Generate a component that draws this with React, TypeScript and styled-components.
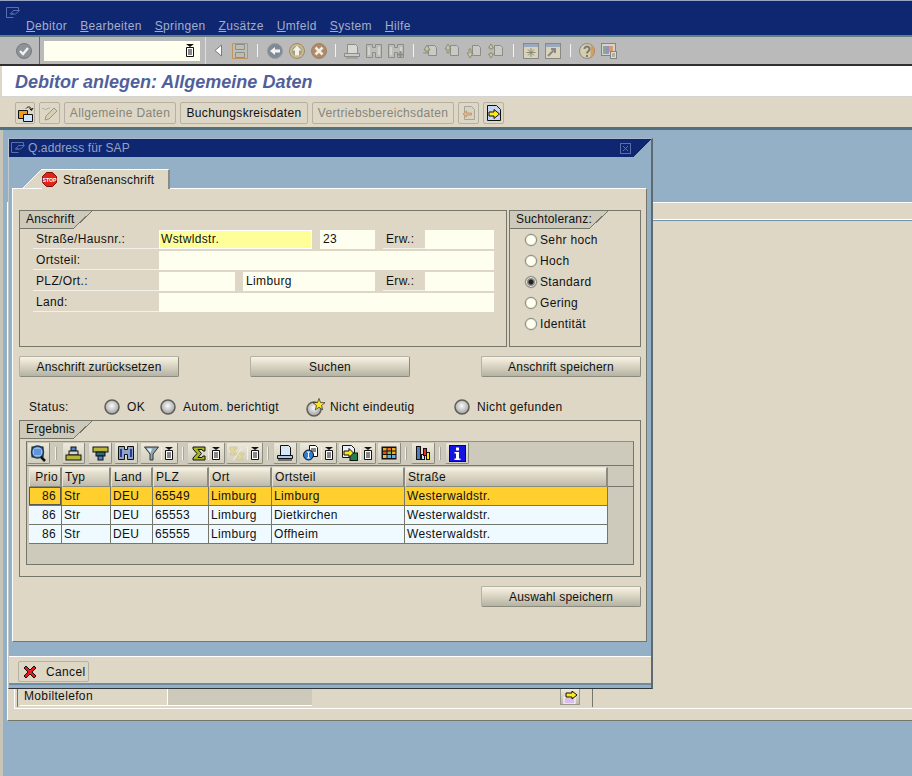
import React from 'react';
import styled, { createGlobalStyle } from 'styled-components';

const GlobalStyle = createGlobalStyle`
  html, body {
    margin: 0;
    padding: 0;
    background: #93b0c6;
  }

  body {
    font-family: "Liberation Sans", Arial, sans-serif;
    font-size: 12px;
    letter-spacing: 0.35px;
    color: #111;
    overflow: hidden;
  }
`;

const beige = '#ded7c6';
const panelGrey = '#cdc9bb';
const blue = '#93b0c6';
const navy = '#0f2770';
const line = '#75766a';

const Screen = styled.div`
  position: relative;
  width: 912px;
  height: 776px;
  overflow: hidden;
  display: flex;
  flex-direction: column;
  background: ${blue};
`;

/* ---------- top of the window ---------- */

const MenuBar = styled.div`
  height: 35px;
  box-sizing: border-box;
  background: ${navy};
  border-top: 1px solid #98a4c4;
  padding: 4px 0 0 5px;
  flex: none;
`;

const MenuRow = styled.nav`
  display: flex;
  gap: 13px;
  margin: -2px 0 0 21px;
  color: #a3aecb;

  u {
    text-decoration-thickness: 1px;
  }
`;

const SysBar = styled.div`
  height: 31px;
  box-sizing: border-box;
  flex: none;
  display: flex;
  align-items: center;
  background: #bababa;
  border-top: 2px solid #5f7f80;
  border-bottom: 2px solid #2f2f2f;
  padding-left: 13px;
`;

const SysCell = styled.div`
  width: 22px;
  height: 22px;
  flex: none;
  display: flex;
  align-items: center;
  justify-content: center;
`;

const SysSep = styled.div<{ $w: number }>`
  width: ${(p) => p.$w}px;
  flex: none;
  display: flex;
  justify-content: center;

  &::before {
    content: '';
    width: 1px;
    height: 13px;
    background: #f2f2f2;
  }
`;

const CommandWrap = styled.div`
  width: 167px;
  height: 27px;
  box-sizing: border-box;
  margin-left: 4px;
  margin-right: 1px;
  padding-left: 4px;
  flex: none;
  display: flex;
  align-items: center;
  border-left: 1px solid #6a6a6a;
  border-right: 1px solid #dcdcdc;
`;

const CommandField = styled.div`
  width: 156px;
  height: 20px;
  box-sizing: border-box;
  background: #fffff0;
  display: flex;
  align-items: center;
  justify-content: flex-end;
  padding-right: 5px;
`;

const TitleBar = styled.h1`
  margin: 0;
  height: 31px;
  box-sizing: border-box;
  flex: none;
  background: #fff;
  border-bottom: 1px solid #d4d4d4;
  border-left: 2px solid ${beige};
  padding: 5px 0 0 13px;
  font-size: 18px;
  line-height: 22px;
  font-weight: bold;
  font-style: italic;
  letter-spacing: 0;
  color: #515f9c;
`;

const AppBar = styled.div`
  height: 33px;
  box-sizing: border-box;
  flex: none;
  display: flex;
  align-items: flex-start;
  gap: 4px;
  padding: 5px 0 0 15px;
  background: ${beige};
  border-bottom: 3px solid #4f7180;
`;

const AppButton = styled.div<{ $w: number; $off?: boolean }>`
  width: ${(p) => p.$w}px;
  height: 22px;
  box-sizing: border-box;
  flex: none;
  display: flex;
  align-items: center;
  justify-content: center;
  border: 1px solid #b4b0a4;
  border-radius: 2px;
  color: ${(p) => (p.$off ? '#85857b' : '#111')};
`;

/* ---------- panel behind the popup ---------- */

const BackArea = styled.div`
  flex: 1;
  display: flex;
  border-left: 3px solid #c8c4b8;
`;

const BackPanel = styled.div`
  width: 100%;
  height: 519px;
  box-sizing: border-box;
  margin: 72px 0 0 4px;
  background: ${beige};
  border-top: 1px solid #fff;
  border-left: 1px solid #fff;
  border-bottom: 1px solid ${line};
  display: flex;
  flex-direction: column;
`;

const BackStrip = styled.div`
  height: 16px;
  flex: none;
  border-bottom: 1px solid #fff;
  box-shadow: 0 1px 0 #6d91ab;
`;

const BackBody = styled.div`
  flex: 1;
`;

const BackFoot = styled.div`
  height: 31px;
  flex: none;
  box-sizing: border-box;
  display: flex;
  margin-left: 3px;
  padding: 0 0 0 3px;
`;

const BackFrame = styled.div`
  height: 20px;
  flex: 1;
  display: flex;
  align-items: flex-start;
  border-left: 1px solid #fff;
  border-bottom: 1px solid #fff;
  box-sizing: border-box;
  padding-left: 2px;
`;

const BackRule = styled.div`
  width: 1px;
  height: 18px;
  background: ${line};
  flex: none;
`;

const BackLabel = styled.div`
  width: 147px;
  height: 17px;
  box-sizing: border-box;
  margin-left: 2px;
  padding: 0 0 0 4px;
  line-height: 14px;
  border-bottom: 1px solid #fff;
  flex: none;
`;

const BackValue = styled.div`
  width: 145px;
  height: 17px;
  box-sizing: border-box;
  flex: none;
  background: ${panelGrey};
  border-left: 1px solid #fff;
  border-bottom: 1px solid #fff;
`;

const BackButton = styled.div`
  width: 20px;
  height: 16px;
  margin-left: 248px;
  flex: none;
  box-sizing: border-box;
  display: flex;
  align-items: flex-end;
  justify-content: center;
  border: 1px solid #9a988c;
  border-top: 0;
  background: linear-gradient(#eeebdd, #bdb9aa);
`;

const BackLine = styled(BackRule)`
  margin-left: 12px;
`;

/* ---------- popup ---------- */

const Popup = styled.section`
  position: absolute;
  left: 8px;
  top: 138px;
  width: 645px;
  height: 551px;
  box-sizing: border-box;
  display: flex;
  flex-direction: column;
  background: ${blue};
  border-top: 1px solid #aab6cc;
  border-right: 2px solid #5d6a70;
  border-bottom: 1px solid #2f3436;
  border-left: 1px solid #c5c8c8;
`;

const PopupTitle = styled.header`
  height: 18px;
  flex: none;
  display: flex;
  align-items: center;
  gap: 2px;
  padding: 0 0 0 1px;
  letter-spacing: 0.1px;
  color: #94a1c6;
  background: linear-gradient(${navy}, ${navy}) no-repeat 0 0 / calc(100% - 17px) 100%,
    linear-gradient(to bottom right, ${navy} 50%, transparent 50%) no-repeat 100% 0 / 17px 100%;
`;

const PopupClose = styled.div`
  margin-left: auto;
  margin-right: 20px;
  display: flex;
`;

const TabStrip = styled.div`
  height: 19px;
  flex: none;
  margin-top: 12px;
  padding-left: 14px;
  display: flex;
`;

const TabSlant = styled.div`
  width: 19px;
  flex: none;
  background: linear-gradient(to top left, ${beige} calc(50% - 0.5px), #fff calc(50% - 0.5px), #fff calc(50% + 0.5px), transparent calc(50% + 0.5px));
`;

/* the tab runs one pixel over the panel's white top edge */
const Tab = styled.div`
  position: relative;
  z-index: 1;
  width: 128px;
  height: 20px;
  box-sizing: border-box;
  flex: none;
  display: flex;
  align-items: center;
  gap: 6px;
  letter-spacing: 0.2px;
  background: ${beige};
  border-top: 1px solid #fff;
  border-right: 2px solid #8b8b80;
`;

const TabPanel = styled.div`
  height: 454px;
  flex: none;
  box-sizing: border-box;
  margin: 0 4px 0 3px;
  padding: 21px 6px 0;
  background: ${beige};
  border-top: 1px solid #fff;
  border-left: 1px solid #fff;
  border-right: 1px solid ${line};
  border-bottom: 1px solid ${line};
`;

const GroupRow = styled.div`
  display: flex;
  gap: 2px;
`;

const Group = styled.fieldset<{ $w: number; $h: number }>`
  margin: 0;
  padding: 0;
  box-sizing: border-box;
  width: ${(p) => p.$w}px;
  height: ${(p) => p.$h}px;
  min-width: 0;
  flex: none;
  border: 1px solid ${line};
`;

const GroupTitle = styled.div<{ $w: number }>`
  position: relative;
  z-index: 0;
  width: ${(p) => p.$w}px;
  height: 18px;
  box-sizing: border-box;
  padding-left: 6px;
  line-height: 17px;
  letter-spacing: 0.2px;
  white-space: nowrap;
  background: ${panelGrey};
  border-bottom: 1px solid ${line};

  &::after {
    content: '';
    position: absolute;
    z-index: -1;
    top: 0;
    left: 100%;
    width: 18px;
    height: 17px;
    background: linear-gradient(to bottom right, ${panelGrey} calc(50% - 0.5px), ${line} calc(50% - 0.5px), ${line} calc(50% + 0.5px), transparent calc(50% + 0.5px));
  }
`;

const Fields = styled.div`
  display: flex;
  flex-direction: column;
  gap: 2px;
  padding: 1px 0 0 13px;
`;

const FieldRow = styled.div`
  display: flex;
  height: 19px;
`;

const FieldLabel = styled.label<{ $w: number; $left?: number }>`
  width: ${(p) => p.$w}px;
  margin-left: ${(p) => p.$left ?? 0}px;
  box-sizing: border-box;
  flex: none;
  padding: 0 0 0 3px;
  line-height: 19px;
  border-bottom: 1px solid #f2f0e8;
`;

const Field = styled.div<{ $w: number; $left?: number; $hot?: boolean }>`
  width: ${(p) => p.$w}px;
  margin-left: ${(p) => p.$left ?? 0}px;
  height: 19px;
  box-sizing: border-box;
  flex: none;
  padding: 0 0 0 ${(p) => (p.$hot ? 1 : 2)}px;
  line-height: 17px;
  background: ${(p) => (p.$hot ? '#ffff99' : '#fffff0')};
  border: 1px solid ${(p) => (p.$hot ? '#fff' : '#fffff0')};
`;

const Radios = styled.div`
  display: flex;
  flex-direction: column;
  padding: 0 0 0 15px;
`;

const RadioRow = styled.div`
  height: 21px;
  display: flex;
  align-items: center;
  gap: 3px;
`;

const RadioDot = styled.span<{ $on?: boolean }>`
  width: 12px;
  height: 12px;
  box-sizing: border-box;
  flex: none;
  border-radius: 50%;
  border: 1px solid #8b8b80;
  box-shadow: inset 0 0 0 1px #f6f4ea, 0 0 0 0.5px #c0bdb0;
  background: ${(p) => (p.$on ? 'radial-gradient(circle, #222 0 2px, #8a8a86 3px)' : '#fffff0')};
`;

const ActionRow = styled.div`
  display: flex;
  justify-content: space-between;
  margin: 9px -1px 0 0;
`;

const ActionEnd = styled(ActionRow)`
  justify-content: flex-end;
`;

const Action = styled.button`
  width: 160px;
  height: 21px;
  box-sizing: border-box;
  padding: 0;
  font: inherit;
  letter-spacing: 0.2px;
  color: #111;
  border: 1px solid #8b8a7e;
  border-top-color: #b4b2a4;
  border-left-color: #b4b2a4;
  border-radius: 2px;
  background: linear-gradient(#f7f4e6, #e2dccb 35%, #d4cfbe 55%, #b6b3a3);
`;

const StatusRow = styled.div`
  display: grid;
  grid-template-columns: 75px 56px 146px 148px 1fr;
  align-items: center;
  height: 20px;
  margin-top: 20px;
  padding-left: 10px;
`;

const StatusItem = styled.div`
  display: flex;
  align-items: center;
  gap: 7px;
`;

const StatusStar = styled(StatusItem)`
  gap: 5px;
`;

const ResultGroup = styled(Group)`
  margin-top: 3px;
`;

const ResultBox = styled.div`
  height: 124px;
  margin: 2px 6px 0;
  box-sizing: border-box;
  background: ${panelGrey};
  border: 1px solid ${line};
  border-top-color: #8f8f84;
`;

const AlvBar = styled.div`
  height: 24px;
  box-sizing: border-box;
  display: flex;
  align-items: flex-start;
  border-bottom: 1px solid ${line};
`;

const AlvButton = styled.div<{ $w: number; $left?: number }>`
  width: ${(p) => p.$w}px;
  margin-left: ${(p) => p.$left ?? 0}px;
  height: 22px;
  box-sizing: border-box;
  flex: none;
  display: flex;
  align-items: center;
  justify-content: center;
  gap: 2px;
  border: 1px solid #8b8a7e;
  border-top-color: #c9c6b8;
  border-left-color: #c9c6b8;
  border-radius: 2px;
  background: linear-gradient(#ece8da, #d2cebe);
`;

const AlvMenu = styled.span`
  display: flex;
  padding-left: 2px;
  border-left: 1px solid #f2f0e8;
`;

const AlvSep = styled.div<{ $w: number }>`
  width: ${(p) => p.$w}px;
  height: 22px;
  flex: none;
  display: flex;
  align-items: center;
  justify-content: center;

  &::before {
    content: '';
    width: 1px;
    height: 13px;
    background: #f2f0e8;
    border-right: 1px solid #a8a698;
  }
`;

const Grid = styled.table`
  width: 605px;
  margin: 1px 0 0 2px;
  table-layout: fixed;
  border-collapse: separate;
  border-spacing: 0;
`;

const HeadCell = styled.th<{ $right?: boolean }>`
  height: 20px;
  box-sizing: border-box;
  padding: 0 2px;
  font-weight: normal;
  text-align: ${(p) => (p.$right ? 'right' : 'left')};
  border: 1px solid #8b8a7e;
  border-top-color: #e8e5d6;
  border-left-color: #e8e5d6;
  border-right-width: 2px;
  background: linear-gradient(#f7f4e6, #e2dccb 30%, #d4cfbe 60%, #bdb9a9);
`;

const HeadFill = styled.th`
  border-bottom: 1px solid ${line};
`;

const Cell = styled.td<{ $hit?: boolean; $right?: boolean; $key?: boolean }>`
  height: 19px;
  box-sizing: border-box;
  padding: 0 ${(p) => (p.$right ? 5 : 2)}px 0 2px;
  text-align: ${(p) => (p.$right ? 'right' : 'left')};
  background: ${(p) => (p.$hit ? '#ffcf2d' : '#eefaff')};
  border-right: 1px solid ${line};
  border-bottom: 1px solid ${line};
  box-shadow: ${(p) => (p.$key ? 'inset 0 0 0 1px #5a5a50' : 'none')};
`;

const FootBar = styled.footer`
  height: 29px;
  flex: none;
  margin-top: 14px;
  box-sizing: border-box;
  padding: 4px 0 0 9px;
  background: ${beige};
  border-top: 1px solid #fff;
  border-bottom: 2px solid #6d8ca4;
`;

const CancelButton = styled.div`
  width: 71px;
  height: 21px;
  box-sizing: border-box;
  display: flex;
  align-items: center;
  gap: 9px;
  padding-left: 4px;
  border: 1px solid #b4b0a4;
  border-radius: 2px;
`;

/* ---------- drawings ---------- */

const Ico = ({ w = 16, h = 16, children }: { w?: number; h?: number; children: React.ReactNode }) => (
  <svg width={w} height={h} viewBox={`0 0 ${w} ${h}`} style={{ display: 'block', flex: 'none' }}>
    {children}
  </svg>
);

const WindowMark = ({ c }: { c: string }) => (
  <Ico>
    <path d="M1.5 2.5h12v3h-5M1.5 2.5v10h7M8.5 5.5l-3 3.500 3 0M5.5 9h5l4-3.500h-6" fill="none" stroke={c} />
  </Ico>
);

const MenuGlyph = () => (
  <Ico w={10} h={13}>
    <path d="M1 0h8L5 3z" fill="#111" />
    <path d="M1.500 3.500h7v9h-7z" fill="#fff" stroke="#111" />
    <path d="M3 6h4M3 8h4M3 10h4" stroke="#111" />
  </Ico>
);

const Ball = ({ fill, ring, children }: { fill: string; ring: string; children: React.ReactNode }) => (
  <Ico>
    <circle cx="8" cy="8" r="7.500" fill={fill} stroke={ring} />
    {children}
  </Ico>
);

const Binocular = ({ c, bg, inner, plus }: { c: string; bg: string; inner: string; plus?: boolean }) => (
  <Ico>
    <path d="M.5 1.500h6v3h3v-3h6v13h-6v-5h-3v5h-6z" fill={bg} stroke={c} />
    <path d="M3 4v8M13 4v8" stroke={inner} strokeWidth="2" />
    {plus && <path d="M12.500 8v7M9 11.500h7" stroke={c} strokeWidth="2" />}
  </Ico>
);

const PageArrow = ({ d }: { d: string }) => (
  <Ico>
    <path d="M6.500 2.500h6l2 2v8h-8z" fill="#c9c9c5" stroke="#8d8d85" />
    <path d={d} fill="#c9c6a8" stroke="#8d8d75" />
  </Ico>
);

const WindowIcon = ({ arrow }: { arrow?: boolean }) => (
  <Ico>
    <rect x="0.500" y="0.500" width="15" height="15" fill="#d9d3bd" stroke="#8a8a84" />
    <rect x="1" y="1" width="14" height="3" fill="#9ba9bd" />
    {arrow ? (
      <path d="M3 13l6-6M6 6h4v4" fill="none" stroke="#8a8a84" strokeWidth="2" />
    ) : (
      <path d="M8 5v9M3.500 9.500h9M5 6.500l6 6M11 6.500l-6 6" stroke="#8a8a70" />
    )}
  </Ico>
);

const icons: Record<string, React.ReactNode> = {
  check: (
    <Ball fill="#8d9398" ring="#77797a">
      <path d="M4 8l3 3 5-6" fill="none" stroke="#f4f4f4" strokeWidth="2.200" />
    </Ball>
  ),
  tri: (
    <Ico w={9} h={13}>
      <path d="M7.500 1v11L1 6.500z" fill="#fff" stroke="#7a7a7a" />
    </Ico>
  ),
  save: (
    <Ico>
      <path d="M.5.500h15v15H.500z" fill="#c0bfb6" stroke="#c4935c" />
      <path d="M3.500 1.500h9v5h-9zM3.500 9.500h9v5h-9z" fill="#bdbdb8" stroke="#8e8e88" />
    </Ico>
  ),
  back: (
    <Ball fill="#7e8b96" ring="#9a9a9a">
      <path d="M3 8l5-4v2.500h5v3H8V12z" fill="#f2f2f2" />
    </Ball>
  ),
  up: (
    <Ball fill="#c9b98f" ring="#a08a5f">
      <circle cx="8" cy="8" r="5" fill="#9ba08c" />
      <path d="M8 2.500l4.500 5H10v5H6v-5H3.500z" fill="#f4f2e4" />
    </Ball>
  ),
  cancel: (
    <Ball fill="#b08a66" ring="#9c8468">
      <path d="M4.500 4.500l7 7M11.500 4.500l-7 7" stroke="#f0eee4" strokeWidth="2.500" />
    </Ball>
  ),
  print: (
    <Ico>
      <path d="M3.500 1.500h8l2 2v7h-10z" fill="#d8d8d4" stroke="#8d8d85" />
      <path d="M.5 10.500h15v3H.500z" fill="#c9c9c5" stroke="#8d8d85" />
      <path d="M2 15h12" stroke="#8d8d85" />
    </Ico>
  ),
  find: <Binocular c="#8d8d85" bg="#bcbcb8" inner="#d2d2ce" />,
  findMore: <Binocular c="#8d8d85" bg="#bcbcb8" inner="#d2d2ce" plus />,
  first: <PageArrow d="M2 7l3-5 3 5H6v2H4V7zM1 10h6" />,
  prev: <PageArrow d="M4 1l3 5H5v4H3V6H1z" />,
  next: <PageArrow d="M4 15l3-5H5V6H3v4H1z" />,
  last: <PageArrow d="M3 1l2.500 4H4v1H2V5H.500zM3 15l2.500-4H4v-1H2v1H.500z" />,
  winNew: <WindowIcon />,
  winLink: <WindowIcon arrow />,
  help: (
    <Ico>
      <circle cx="8" cy="8" r="7.500" fill="#d4cdb0" stroke="#8a8a84" />
      <path d="M11.500 1.500a7 7 0 0 1 0 13z" fill="#d08f4f" opacity=".75" />
      <path d="M5.500 6a2.500 2.500 0 1 1 4 2c-1 .8-1.500 1.200-1.500 2.500M8 12v2" fill="none" stroke="#7b7b75" strokeWidth="2" />
    </Ico>
  ),
  layout: (
    <Ico>
      <rect x=".5" y=".5" width="14" height="12" fill="#d4d4ce" stroke="#85857f" />
      <rect x="2" y="3" width="3" height="8" fill="#7fb27f" />
      <rect x="5" y="3" width="3" height="8" fill="#9a8fc0" />
      <rect x="8" y="3" width="4" height="6" fill="#d89b6a" />
      <rect x="9.500" y="8.500" width="6" height="7" fill="#dedbd0" stroke="#85857f" />
      <path d="M11 11h3M11 13h3" stroke="#85857f" />
    </Ico>
  ),
  otherObj: (
    <Ico w={17} h={17}>
      <path d="M1.500 5.500h9v8h-9z" fill="#f09a1a" stroke="#111" />
      <path d="M6.500 9.500h9v7h-9z" fill="#cfe4ff" stroke="#111" />
      <path d="M9 3.500c2-2.500 5-2 5.500 1.500M12.500 3.500l2 2 1.500-2.500" fill="none" stroke="#111" />
    </Ico>
  ),
  pencil: (
    <Ico w={17} h={17}>
      <path d="M4 15l1-4 8-8 3 3-8 8z" fill="#d8cfb2" stroke="#9a9a8c" />
      <path d="M1 4c2-2 3 2 5 0s2 0 3-1" fill="none" stroke="#a8a89a" />
    </Ico>
  ),
  pageOff: (
    <Ico>
      <path d="M3.500 1.500h7l3 3v10h-10z" fill="#d8d2c0" stroke="#a4a498" />
      <path d="M2 9l3.500-3v2h5v2h-5v2z" fill="#e8b888" stroke="#c09a78" />
    </Ico>
  ),
  pageNext: (
    <Ico w={14} h={16}>
      <path d="M.5.500h9l4 4v11H.500z" fill="#c5d6f5" stroke="#111" />
      <path d="M2 7h5V4.500L12.500 9 7 13.500V11H2z" fill="#ffe81a" stroke="#111" />
    </Ico>
  ),
  detail: (
    <Ico w={17} h={17}>
      <rect x="2" y="2" width="11" height="10" fill="#4f93e0" stroke="#111" />
      <circle cx="7.500" cy="7" r="6" fill="#bcd6f2" fillOpacity=".6" stroke="#1a3a5a" strokeWidth="1.500" />
      <path d="M4 5h7M4 7h7M4 9h7" stroke="#2d6fd0" />
      <path d="M11 12l4 4" stroke="#111" strokeWidth="2.500" />
    </Ico>
  ),
  sortUp: (
    <Ico w={17} h={15}>
      <rect x="6" y="1" width="5" height="4" fill="#4a83d6" stroke="#111" />
      <rect x="4" y="5" width="9" height="4" fill="#d9d6c5" stroke="#111" />
      <rect x="1" y="9" width="15" height="5" fill="#b8b63a" stroke="#111" />
    </Ico>
  ),
  sortDown: (
    <Ico w={17} h={15}>
      <rect x="1" y="1" width="15" height="5" fill="#b8b63a" stroke="#111" />
      <rect x="4" y="6" width="9" height="4" fill="#2c6b70" stroke="#111" />
      <rect x="6" y="10" width="5" height="4" fill="#4a83d6" stroke="#111" />
    </Ico>
  ),
  findDark: <Binocular c="#111" bg="#8ea2cc" inner="#24408a" />,
  filter: (
    <Ico w={15} h={15}>
      <path d="M.5 1h14L9 8v6H6V8z" fill="#8fa8b8" stroke="#333" />
      <path d="M3 2.500h5L6.500 7z" fill="#e8eef0" />
    </Ico>
  ),
  sum: (
    <Ico w={14} h={15}>
      <path d="M1 1h12v4h-2l-1-1.500H6L9.500 7.500 6 11.500h4l1-1.500h2v4H1v-2l4-4.500L1 3z" fill="#a8b81a" stroke="#111" />
    </Ico>
  ),
  sumOff: (
    <Ico w={16} h={15}>
      <path d="M1 1h7v2H4.500l2 2.500-2 2.500H8v1H1V8l2-2.500L1 3z" fill="#e8d898" stroke="#cfc7a0" />
      <path d="M8 7h7v2h-3.500l2 2-2 2H15v1H8v-1l2-2-2-2z" fill="#e8d898" stroke="#cfc7a0" />
      <path d="M4 14L13 2" stroke="#f2f0e4" />
    </Ico>
  ),
  printDark: (
    <Ico>
      <path d="M3.500.500h8l2 2v8h-10z" fill="#d8e8f8" stroke="#111" />
      <path d="M.5 10.500h15v3H.500z" fill="#a9c8ec" stroke="#111" />
      <path d="M1 15h14" stroke="#111" />
    </Ico>
  ),
  infoPage: (
    <Ico>
      <path d="M6.500.500h6l2 2v9h-8z" fill="#fff" stroke="#111" />
      <path d="M8 4h5M8 6h5" stroke="#111" />
      <circle cx="5.500" cy="10" r="5" fill="#2d7fd6" stroke="#111" />
      <path d="M4 7h3M5.500 7v6M4 13h3" stroke="#fff" />
    </Ico>
  ),
  exportDoc: (
    <Ico>
      <path d="M.5.500h9l3 3v9H.500z" fill="#e8f0ff" stroke="#111" />
      <rect x="8" y="8" width="7.500" height="7.500" fill="#1f7f4f" stroke="#111" />
      <path d="M2 6h5V3.500l4.500 4.500L7 12.500V10H2z" fill="#ffe81a" stroke="#111" />
    </Ico>
  ),
  grid: (
    <Ico>
      <rect x=".5" y="1.500" width="15" height="13" fill="#111" />
      <rect x="2" y="3" width="3.500" height="2.500" fill="#e8b020" />
      <rect x="6.500" y="3" width="3.500" height="2.500" fill="#e8702a" />
      <rect x="11" y="3" width="3.500" height="2.500" fill="#e8b020" />
      <rect x="2" y="6.500" width="3.500" height="2.500" fill="#e84a2a" />
      <rect x="6.500" y="6.500" width="3.500" height="2.500" fill="#7fbf4f" />
      <rect x="11" y="6.500" width="3.500" height="2.500" fill="#e8b020" />
      <rect x="2" y="10" width="3.500" height="3" fill="#f0c040" />
      <rect x="6.500" y="10" width="3.500" height="3" fill="#5fb4e8" />
      <rect x="11" y="10" width="3.500" height="3" fill="#5fb4e8" />
    </Ico>
  ),
  chart: (
    <Ico>
      <rect x="1.500" y="1.500" width="4" height="13" fill="#4a7fc8" stroke="#111" />
      <rect x="6.500" y="9.500" width="3" height="5" fill="#cfe4f5" stroke="#111" />
      <rect x="8.500" y="3.500" width="3" height="7" fill="#e8302a" stroke="#111" />
      <rect x="11.500" y="7.500" width="3" height="7" fill="#ffe81a" stroke="#111" />
    </Ico>
  ),
  info: (
    <Ico w={17} h={17}>
      <rect x=".5" y=".5" width="16" height="16" fill="#1414e0" stroke="#111" />
      <path d="M7 2.500h3v3H7z" fill="#fff" />
      <path d="M5.500 7h4.500v6.500h1.500V15h-6v-1.500H7V8.500H5.500z" fill="#fff" />
    </Ico>
  ),
  stop: (
    <Ico w={15} h={15}>
      <path d="M4.500.5h6l4 4v6l-4 4h-6l-4-4v-6z" fill="#e2231a" stroke="#7a1010" />
      <text x="7.500" y="9.800" textAnchor="middle" fontSize="5.200" fontWeight="bold" letterSpacing="0" fill="#fff" fontFamily="Liberation Sans">STOP</text>
    </Ico>
  ),
  led: (
    <Ico>
      <defs>
        <radialGradient id="ledFace" cx="48%" cy="42%" r="58%">
          <stop offset="0" stopColor="#fafafa" />
          <stop offset="1" stopColor="#9f9f9c" />
        </radialGradient>
      </defs>
      <circle cx="8" cy="8" r="7" fill="url(#ledFace)" stroke="#5e5e58" strokeWidth="1.500" />
    </Ico>
  ),
  ledStar: (
    <Ico w={19} h={19}>
      <circle cx="8" cy="11" r="7" fill="url(#ledFace)" stroke="#5e5e58" strokeWidth="1.500" />
      <path d="M13 .5l1.500 4 4.500.2-3.500 2.800 1.200 4.300-3.700-2.500-3.700 2.500 1.200-4.300L7 4.700l4.500-.2z" fill="#ffe81a" stroke="#222" strokeWidth=".7" />
    </Ico>
  ),
  red: (
    <Ico w={14} h={14}>
      <path d="M1 3l2-2 4 4 4-4 2 2-4 4 4 4-2 2-4-4-4 4-2-2 4-4z" fill="#e81a1a" stroke="#111" />
    </Ico>
  ),
  close: (
    <Ico w={11} h={11}>
      <rect x=".5" y=".5" width="10" height="10" fill="none" stroke="#5a6fa8" />
      <path d="M3 3l5 5M8 3l-5 5" stroke="#5a6fa8" />
    </Ico>
  ),
  goMark: (
    <Ico w={15} h={13}>
      <rect x="1" y="6" width="11" height="7" fill="#d8c0e8" stroke="#fff" />
      <path d="M3 0h6V-2l5 4-5 4V4H3z" transform="translate(0 2)" fill="#ffe81a" stroke="#111" />
    </Ico>
  ),
};

/* ---------- content ---------- */

const menus = [
  ['D', 'ebitor'],
  ['B', 'earbeiten'],
  ['S', 'pringen'],
  ['Z', 'usätze'],
  ['U', 'mfeld'],
  ['S', 'ystem'],
  ['H', 'ilfe'],
];

type SysItem = string | number;
const sysAfterField: SysItem[] = ['tri', 'save', 13, 'back', 'up', 'cancel', 11, 'print', 'find', 'findMore', 12, 'first', 'prev', 'next', 'last', 13, 'winNew', 'winLink', 12, 'help', 'layout'];

const rows = [
  ['86', 'Str', 'DEU', '65549', 'Limburg', 'Limburg', 'Westerwaldstr.'],
  ['86', 'Str', 'DEU', '65553', 'Limburg', 'Dietkirchen', 'Westerwaldstr.'],
  ['86', 'Str', 'DEU', '65555', 'Limburg', 'Offheim', 'Westerwaldstr.'],
];
const heads = ['Prio', 'Typ', 'Land', 'PLZ', 'Ort', 'Ortsteil', 'Straße'];
const widths = [33, 49, 42, 56, 63, 133, 203];
const tolerances = ['Sehr hoch', 'Hoch', 'Standard', 'Gering', 'Identität'];

type AlvItem = { sep: number } | { icon: string; w: number; menu?: boolean; left?: number };
const alvItems: AlvItem[] = [
  { icon: 'detail', w: 23 },
  { sep: 12 },
  { icon: 'sortUp', w: 23 },
  { icon: 'sortDown', w: 24, left: 3 },
  { icon: 'findDark', w: 24, left: 2 },
  { icon: 'filter', w: 38, left: 2, menu: true },
  { sep: 9 },
  { icon: 'sum', w: 38, menu: true },
  { icon: 'sumOff', w: 37, left: 1, menu: true },
  { sep: 10 },
  { icon: 'printDark', w: 24 },
  { icon: 'infoPage', w: 38, left: 2, menu: true },
  { icon: 'exportDoc', w: 38, left: 1, menu: true },
  { icon: 'grid', w: 24, left: 1 },
  { sep: 10 },
  { icon: 'chart', w: 24 },
  { sep: 10 },
  { icon: 'info', w: 24 },
];

export default function App() {
  return (
    <Screen>
      <GlobalStyle />
      <MenuBar>
        <WindowMark c="#5a6fa8" />
        <MenuRow>
          {menus.map(([k, rest], i) => (
            <span key={i}>
              <u>{k}</u>
              {rest}
            </span>
          ))}
        </MenuRow>
      </MenuBar>

      <SysBar>
        <SysCell>{icons.check}</SysCell>
        <CommandWrap>
          <CommandField>
            <MenuGlyph />
          </CommandField>
        </CommandWrap>
        {sysAfterField.map((item, i) =>
          typeof item === 'number' ? <SysSep key={i} $w={item} /> : <SysCell key={i}>{icons[item]}</SysCell>,
        )}
      </SysBar>

      <TitleBar>Debitor anlegen: Allgemeine Daten</TitleBar>

      <AppBar>
        <AppButton $w={20}>{icons.otherObj}</AppButton>
        <AppButton $w={21}>{icons.pencil}</AppButton>
        <AppButton $w={112} $off>Allgemeine Daten</AppButton>
        <AppButton $w={128}>Buchungskreisdaten</AppButton>
        <AppButton $w={142} $off>Vertriebsbereichsdaten</AppButton>
        <AppButton $w={21}>{icons.pageOff}</AppButton>
        <AppButton $w={21}>{icons.pageNext}</AppButton>
      </AppBar>

      <BackArea>
        <BackPanel>
          <BackStrip />
          <BackBody />
          <BackFoot>
            <BackFrame>
              <BackRule />
              <BackLabel>Mobiltelefon</BackLabel>
              <BackValue />
              <BackButton>{icons.goMark}</BackButton>
              <BackLine />
            </BackFrame>
          </BackFoot>
        </BackPanel>
      </BackArea>

      <Popup>
        <PopupTitle>
          <WindowMark c="#5a6fa8" />
          Q.address für SAP
          <PopupClose>{icons.close}</PopupClose>
        </PopupTitle>
        <TabStrip>
          <TabSlant />
          <Tab>
            {icons.stop}
            Straßenanschrift
          </Tab>
        </TabStrip>
        <TabPanel>
          <GroupRow>
            <Group $w={488} $h={137}>
              <GroupTitle $w={54}>Anschrift</GroupTitle>
              <Fields>
                <FieldRow>
                  <FieldLabel $w={126}>Straße/Hausnr.:</FieldLabel>
                  <Field $w={153} $hot>Wstwldstr.</Field>
                  <Field $w={55} $left={8}>23</Field>
                  <FieldLabel $w={42} $left={8}>Erw.:</FieldLabel>
                  <Field $w={69} />
                </FieldRow>
                <FieldRow>
                  <FieldLabel $w={126}>Ortsteil:</FieldLabel>
                  <Field $w={335} />
                </FieldRow>
                <FieldRow>
                  <FieldLabel $w={126}>PLZ/Ort.:</FieldLabel>
                  <Field $w={76} />
                  <Field $w={132} $left={8}>Limburg</Field>
                  <FieldLabel $w={42} $left={8}>Erw.:</FieldLabel>
                  <Field $w={69} />
                </FieldRow>
                <FieldRow>
                  <FieldLabel $w={126}>Land:</FieldLabel>
                  <Field $w={335} />
                </FieldRow>
              </Fields>
            </Group>
            <Group $w={132} $h={137}>
              <GroupTitle $w={80}>Suchtoleranz:</GroupTitle>
              <Radios>
                {tolerances.map((t) => (
                  <RadioRow key={t}>
                    <RadioDot $on={t === 'Standard'} />
                    {t}
                  </RadioRow>
                ))}
              </Radios>
            </Group>
          </GroupRow>

          <ActionRow>
            <Action>Anschrift zurücksetzen</Action>
            <Action>Suchen</Action>
            <Action>Anschrift speichern</Action>
          </ActionRow>

          <StatusRow>
            <span>Status:</span>
            <StatusItem>{icons.led}OK</StatusItem>
            <StatusItem>{icons.led}Autom. berichtigt</StatusItem>
            <StatusStar>{icons.ledStar}Nicht eindeutig</StatusStar>
            <StatusItem>{icons.led}Nicht gefunden</StatusItem>
          </StatusRow>

          <ResultGroup $w={622} $h={157}>
            <GroupTitle $w={54}>Ergebnis</GroupTitle>
            <ResultBox>
              <AlvBar>
                {alvItems.map((item, i) =>
                  'sep' in item ? (
                    <AlvSep key={i} $w={item.sep} />
                  ) : (
                    <AlvButton key={i} $w={item.w} $left={item.left}>
                      {icons[item.icon]}
                      {item.menu && (
                        <AlvMenu>
                          <MenuGlyph />
                        </AlvMenu>
                      )}
                    </AlvButton>
                  ),
                )}
              </AlvBar>
              <Grid>
                <colgroup>
                  {widths.map((w, i) => (
                    <col key={i} style={{ width: w }} />
                  ))}
                  <col />
                </colgroup>
                <thead>
                  <tr>
                    {heads.map((h, i) => (
                      <HeadCell key={h} $right={i === 0}>{h}</HeadCell>
                    ))}
                    <HeadFill />
                  </tr>
                </thead>
                <tbody>
                  {rows.map((r, ri) => (
                    <tr key={ri}>
                      {r.map((c, ci) => (
                        <Cell key={ci} $hit={ri === 0} $right={ci === 0} $key={ri === 0 && ci === 0}>
                          {c}
                        </Cell>
                      ))}
                    </tr>
                  ))}
                </tbody>
              </Grid>
            </ResultBox>
          </ResultGroup>

          <ActionEnd>
            <Action>Auswahl speichern</Action>
          </ActionEnd>
        </TabPanel>
        <FootBar>
          <CancelButton>
            {icons.red}
            Cancel
          </CancelButton>
        </FootBar>
      </Popup>
    </Screen>
  );
}
